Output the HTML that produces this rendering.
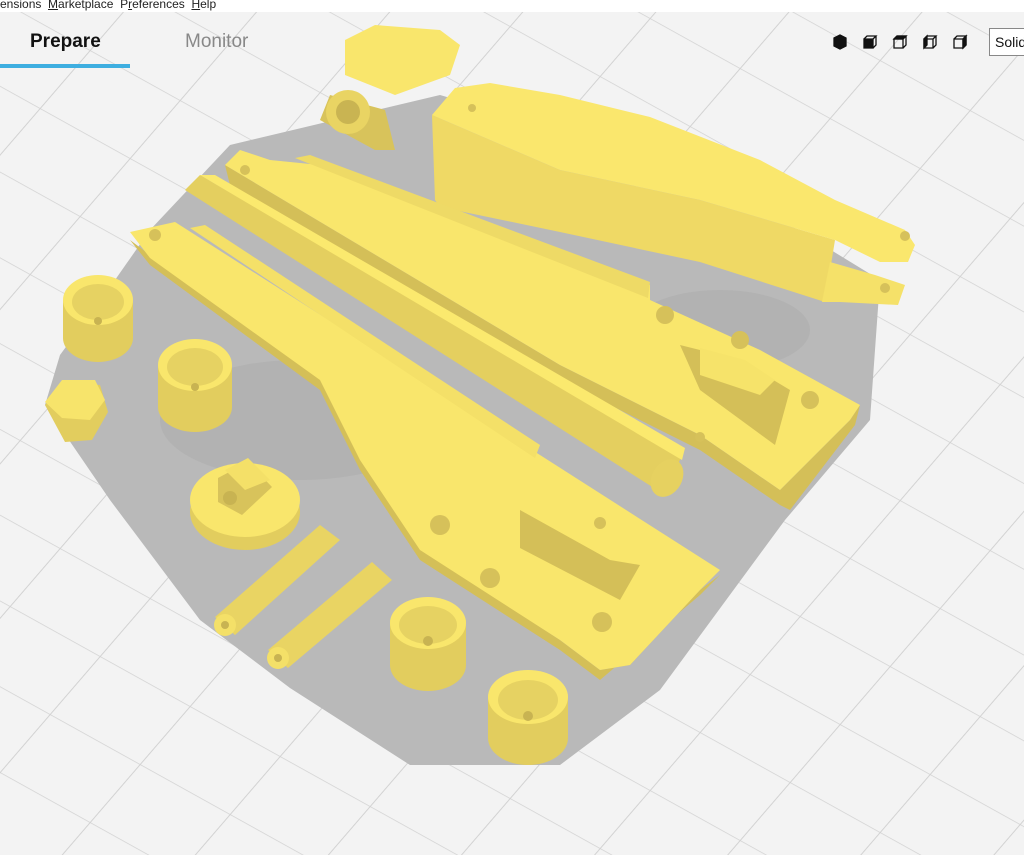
<!DOCTYPE html>
<html><head><meta charset="utf-8"><style>
html,body{margin:0;padding:0;width:1024px;height:855px;overflow:hidden;background:#f2f2f2;font-family:"Liberation Sans",sans-serif;position:relative}
#menu{position:absolute;left:0;top:0;width:1024px;height:12px;background:#fff;font-size:12px;line-height:9px;color:#222;white-space:nowrap;overflow:hidden}
.tab{position:absolute;top:31px;font-size:19px}
svg{display:block}
</style></head><body>
<svg width="1024" height="855" style="position:absolute;left:0;top:0">
<defs>
<pattern id="g" width="100" height="100" patternUnits="userSpaceOnUse" patternTransform="matrix(0.9 0.5 -0.5 0.58 0 0)">
<path d="M0 0 H100 M0 0 V100" stroke="#d2d2d2" stroke-width="2" fill="none"/>
</pattern>
</defs>
<rect width="1024" height="855" fill="#f3f3f3"/>
<rect width="1024" height="855" fill="url(#g)"/>
<polygon fill="#b9b9b9" points="230,145 440,95 700,170 880,280 870,420 785,520 660,690 560,765 410,765 290,688 200,620 110,500 45,405 60,355 115,280 150,230"/>
<g fill="#acacac" opacity=".5"><ellipse cx="300" cy="420" rx="140" ry="60"/><ellipse cx="720" cy="330" rx="90" ry="40"/></g>
<!-- top right big arm -->
<polygon fill="#efd965" points="432,115 560,170 700,200 835,240 825,302 700,262 560,232 440,207 435,200"/>
<polygon fill="#fae76d" points="432,115 455,88 490,83 560,95 650,117 760,160 835,200 905,230 915,245 908,262 880,262 835,240 700,200 560,170"/>
<polygon fill="#f5e169" points="830,262 875,275 905,285 898,305 840,302 822,302"/>
<circle cx="905" cy="236" r="5" fill="#d6c15a"/><circle cx="885" cy="288" r="5" fill="#d6c15a"/><circle cx="472" cy="108" r="4" fill="#d6c15a"/>
<!-- top part -->
<polygon fill="#d8c35b" points="330,95 385,110 395,150 375,150 320,120"/>
<polygon fill="#f9e66c" points="345,40 375,25 440,30 460,45 450,75 395,95 345,75"/>
<circle cx="348" cy="112" r="22" fill="#e9d463"/><circle cx="348" cy="112" r="12" fill="#c9b452"/>
<!-- middle arm -->
<polygon fill="#d4bf58" points="225,165 230,185 560,380 700,450 780,505 790,510 855,425 860,405 850,420 780,490 700,435 560,365"/>
<polygon fill="#f9e66c" points="225,165 240,150 270,160 320,165 650,285 650,300 760,350 860,405 850,420 780,490 700,435 560,365"/>
<polygon fill="#eeda66" points="295,158 310,155 650,282 648,298"/>
<polygon fill="#d4bf58" points="680,345 740,360 790,390 775,445 700,390"/>
<polygon fill="#f6e36a" points="700,348 745,360 775,380 760,395 700,375"/>
<!-- rod -->
<polygon fill="#e4cf5f" points="185,190 200,175 682,455 665,495"/>
<polygon fill="#fbe96e" points="200,175 215,175 685,448 682,460"/>
<ellipse cx="667" cy="478" rx="15" ry="20" fill="#e6d160" transform="rotate(30 667 478)"/>
<!-- bottom-left arm -->
<polygon fill="#d4bf58" points="130,240 150,265 320,390 360,470 420,560 560,650 600,680 700,595 720,575 700,590 630,665 600,670 560,640 420,548 360,458 320,378 150,255"/>
<polygon fill="#f9e66c" points="130,232 175,222 540,455 720,570 700,590 630,665 600,670 560,640 420,550 360,460 320,380 150,258"/>
<polygon fill="#f4e068" points="190,228 205,225 540,445 535,458"/>
<polygon fill="#d4bf58" points="520,510 610,560 640,565 620,600 520,548"/>
<!-- hex nuts -->
<g fill="#d6c15a"><circle cx="440" cy="525" r="10"/><circle cx="490" cy="578" r="10"/><circle cx="602" cy="622" r="10"/><circle cx="665" cy="315" r="9"/><circle cx="740" cy="340" r="9"/><circle cx="810" cy="400" r="9"/><circle cx="600" cy="523" r="6"/><circle cx="700" cy="437" r="5"/><circle cx="155" cy="235" r="6"/><circle cx="245" cy="170" r="5"/></g>
<!-- cylinders -->
<g>
<rect x="63" y="300" width="70" height="38" fill="#e2cd5e"/><ellipse cx="98" cy="338" rx="35" ry="24" fill="#e2cd5e"/><ellipse cx="98" cy="300" rx="35" ry="25" fill="#f9e66c"/><ellipse cx="98" cy="302" rx="26" ry="18" fill="#e6d262"/><circle cx="98" cy="321" r="4" fill="#c8b352"/>
<rect x="158" y="365" width="74" height="42" fill="#e2cd5e"/><ellipse cx="195" cy="407" rx="37" ry="25" fill="#e2cd5e"/><ellipse cx="195" cy="365" rx="37" ry="26" fill="#f9e66c"/><ellipse cx="195" cy="367" rx="28" ry="19" fill="#e6d262"/><circle cx="195" cy="387" r="4" fill="#c8b352"/>
<rect x="390" y="620" width="76" height="45" fill="#e2cd5e"/><ellipse cx="428" cy="665" rx="38" ry="26" fill="#e2cd5e"/><ellipse cx="428" cy="623" rx="38" ry="26" fill="#f9e66c"/><ellipse cx="428" cy="625" rx="29" ry="19" fill="#e6d262"/><circle cx="428" cy="641" r="5" fill="#c8b352"/>
<rect x="488" y="695" width="80" height="43" fill="#e2cd5e"/><ellipse cx="528" cy="738" rx="40" ry="27" fill="#e2cd5e"/><ellipse cx="528" cy="697" rx="40" ry="27" fill="#f9e66c"/><ellipse cx="528" cy="700" rx="30" ry="20" fill="#e6d262"/><circle cx="528" cy="716" r="5" fill="#c8b352"/>
<polygon fill="#e2cd5e" points="45,405 62,382 100,385 108,412 92,440 65,442"/><polygon fill="#f7e46b" points="45,402 62,380 95,380 105,400 90,420 62,418"/>
<ellipse cx="245" cy="512" rx="55" ry="38" fill="#e2cd5e"/><ellipse cx="245" cy="500" rx="55" ry="37" fill="#f9e66c"/>
<polygon fill="#d8c35b" points="218,478 248,462 272,487 242,515 218,502"/><polygon fill="#f4e068" points="225,470 248,458 270,480 245,490"/><circle cx="230" cy="498" r="7" fill="#c8b352"/>
<polygon fill="#e9d463" points="215,617 320,525 340,540 235,635"/><circle cx="225" cy="625" r="11" fill="#f4e068"/><circle cx="225" cy="625" r="4" fill="#c8b352"/>
<polygon fill="#e9d463" points="268,650 372,562 392,580 288,668"/><circle cx="278" cy="658" r="11" fill="#f4e068"/><circle cx="278" cy="658" r="4" fill="#c8b352"/>
</g>
<!-- view icons -->
<g stroke="#111" stroke-width="1.3" fill="none">
<path d="M834 38 l6-3 6 3 v8 l-6 3 -6-3z" fill="#111"/>
<path d="M864 39 h9 v9 h-9z" fill="#111"/><path d="M864 39 l3-3 h9 l-3 3 M873 48 l3-3 v-9"/>
<path d="M894 39 h9 v9 h-9z M894 39 l3-3 h9 l-3 3 M903 48 l3-3 v-9"/><path d="M897 36 h9 l-3 3 h-9z" fill="#111"/>
<path d="M924 39 h9 v9 h-9z M924 39 l3-3 h9 l-3 3 M933 48 l3-3 v-9"/><path d="M924 39 l3-3 v9 l-3 3z" fill="#111"/>
<path d="M954 39 h9 v9 h-9z M954 39 l3-3 h9 l-3 3 M963 48 l3-3 v-9"/><path d="M963 39 l3-3 v9 l-3 3z" fill="#111"/>
</g>
<rect x="0" y="64" width="130" height="4" fill="#3eaee0"/>
<rect x="989.5" y="28.5" width="40" height="27" fill="#fff" stroke="#888"/>
<text x="995" y="47" font-size="14" fill="#111" font-family="Liberation Sans">Solid</text>
</svg>
<div id="menu">ensions &nbsp;<u>M</u>arketplace &nbsp;P<u>r</u>eferences &nbsp;<u>H</u>elp</div>
<div class="tab" style="left:30px;font-weight:bold;color:#111">Prepare</div>
<div class="tab" style="left:185px;color:#888">Monitor</div>
</body></html>
